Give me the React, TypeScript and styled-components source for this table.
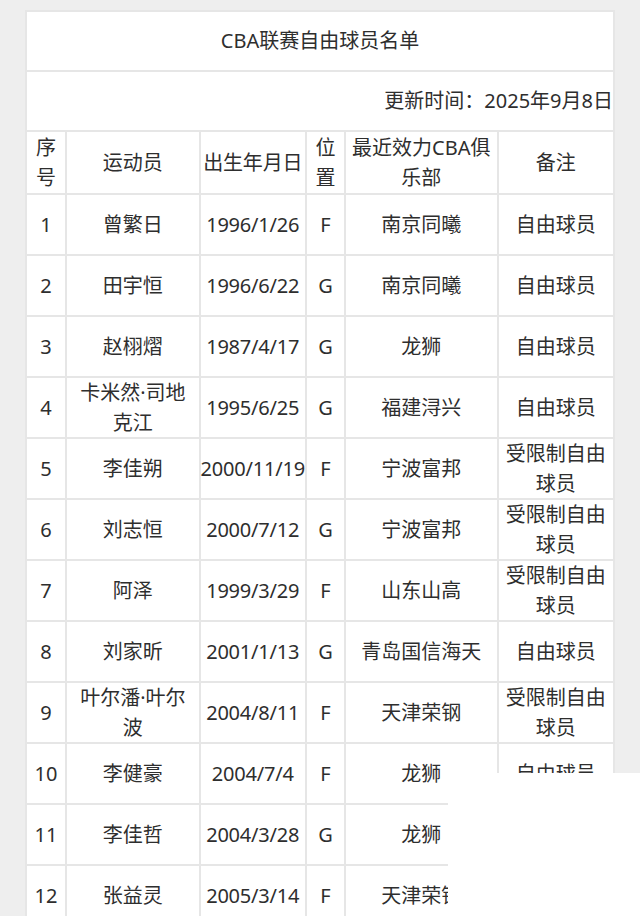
import React from "react";
import styled, { createGlobalStyle } from "styled-components";

const GlobalStyle = createGlobalStyle`
  html, body {
    margin: 0;
    padding: 0;
    background: #eeeeee;
  }
  body {
    font-family: "Noto Sans", "Noto Sans CJK SC", sans-serif;
    color: #2e2e2e;
  }
`;

const Page = styled.div`
  position: relative;
  width: 640px;
  height: 916px;
  overflow: hidden;
  background: #eeeeee;
  padding: 10px 0 0 25px;
  box-sizing: border-box;
`;

const Table = styled.table`
  border-collapse: collapse;
  table-layout: fixed;
  width: 590px;
  background: #ffffff;
  border: 2px solid #e6e6e6;
  font-size: 20px;
  line-height: 29.5px;
`;

const Cell = styled.td<{ $align?: "left" | "center" | "right"; $h?: number }>`
  border: 2px solid #e6e6e6;
  padding: 0 5px;
  height: ${(p) => p.$h ?? 59}px;
  text-align: ${(p) => p.$align ?? "center"};
  vertical-align: middle;
  overflow: visible;
  word-break: break-all;
`;

const DateCell = styled(Cell)`
  padding: 0;
  white-space: nowrap;
  letter-spacing: -0.2px;
`;

const UpdateCell = styled(Cell)`
  padding-right: 0;
`;

const Overlay = styled.div`
  position: absolute;
  left: 448px;
  top: 773px;
  right: 0;
  bottom: 0;
  background: #ffffff;
`;

type Row = [string, string, string, string, string, string];

const rows: Row[] = [
  ["1", "曾繁日", "1996/1/26", "F", "南京同曦", "自由球员"],
  ["2", "田宇恒", "1996/6/22", "G", "南京同曦", "自由球员"],
  ["3", "赵栩熠", "1987/4/17", "G", "龙狮", "自由球员"],
  ["4", "卡米然·司地克江", "1995/6/25", "G", "福建浔兴", "自由球员"],
  ["5", "李佳朔", "2000/11/19", "F", "宁波富邦", "受限制自由球员"],
  ["6", "刘志恒", "2000/7/12", "G", "宁波富邦", "受限制自由球员"],
  ["7", "阿泽", "1999/3/29", "F", "山东山高", "受限制自由球员"],
  ["8", "刘家昕", "2001/1/13", "G", "青岛国信海天", "自由球员"],
  ["9", "叶尔潘·叶尔波", "2004/8/11", "F", "天津荣钢", "受限制自由球员"],
  ["10", "李健豪", "2004/7/4", "F", "龙狮", "自由球员"],
  ["11", "李佳哲", "2004/3/28", "G", "龙狮", "自由球员"],
  ["12", "张益灵", "2005/3/14", "F", "天津荣钢", "自由球员"],
];

const widths = [40, 133, 106, 39, 152, 116];

export default function App() {
  return (
    <>
      <GlobalStyle />
      <Page>
        <Table>
          <colgroup>
            {widths.map((w, i) => (
              <col key={i} style={{ width: w }} />
            ))}
          </colgroup>
          <tbody>
            <tr>
              <Cell colSpan={6} $h={58}>CBA联赛自由球员名单</Cell>
            </tr>
            <tr>
              <UpdateCell colSpan={6} $h={58} $align="right">
                更新时间：2025年9月8日
              </UpdateCell>
            </tr>
            <tr>
              <Cell $h={61}>序号</Cell>
              <Cell $h={61}>运动员</Cell>
              <DateCell $h={61}>出生年月日</DateCell>
              <Cell $h={61}>位置</Cell>
              <Cell $h={61}>最近效力CBA俱乐部</Cell>
              <Cell $h={61}>备注</Cell>
            </tr>
            {rows.map((r) => (
              <tr key={r[0]}>
                <Cell>{r[0]}</Cell>
                <Cell>{r[1]}</Cell>
                <DateCell>{r[2]}</DateCell>
                <Cell>{r[3]}</Cell>
                <Cell>{r[4]}</Cell>
                <Cell>{r[5]}</Cell>
              </tr>
            ))}
          </tbody>
        </Table>
        <Overlay />
      </Page>
    </>
  );
}
